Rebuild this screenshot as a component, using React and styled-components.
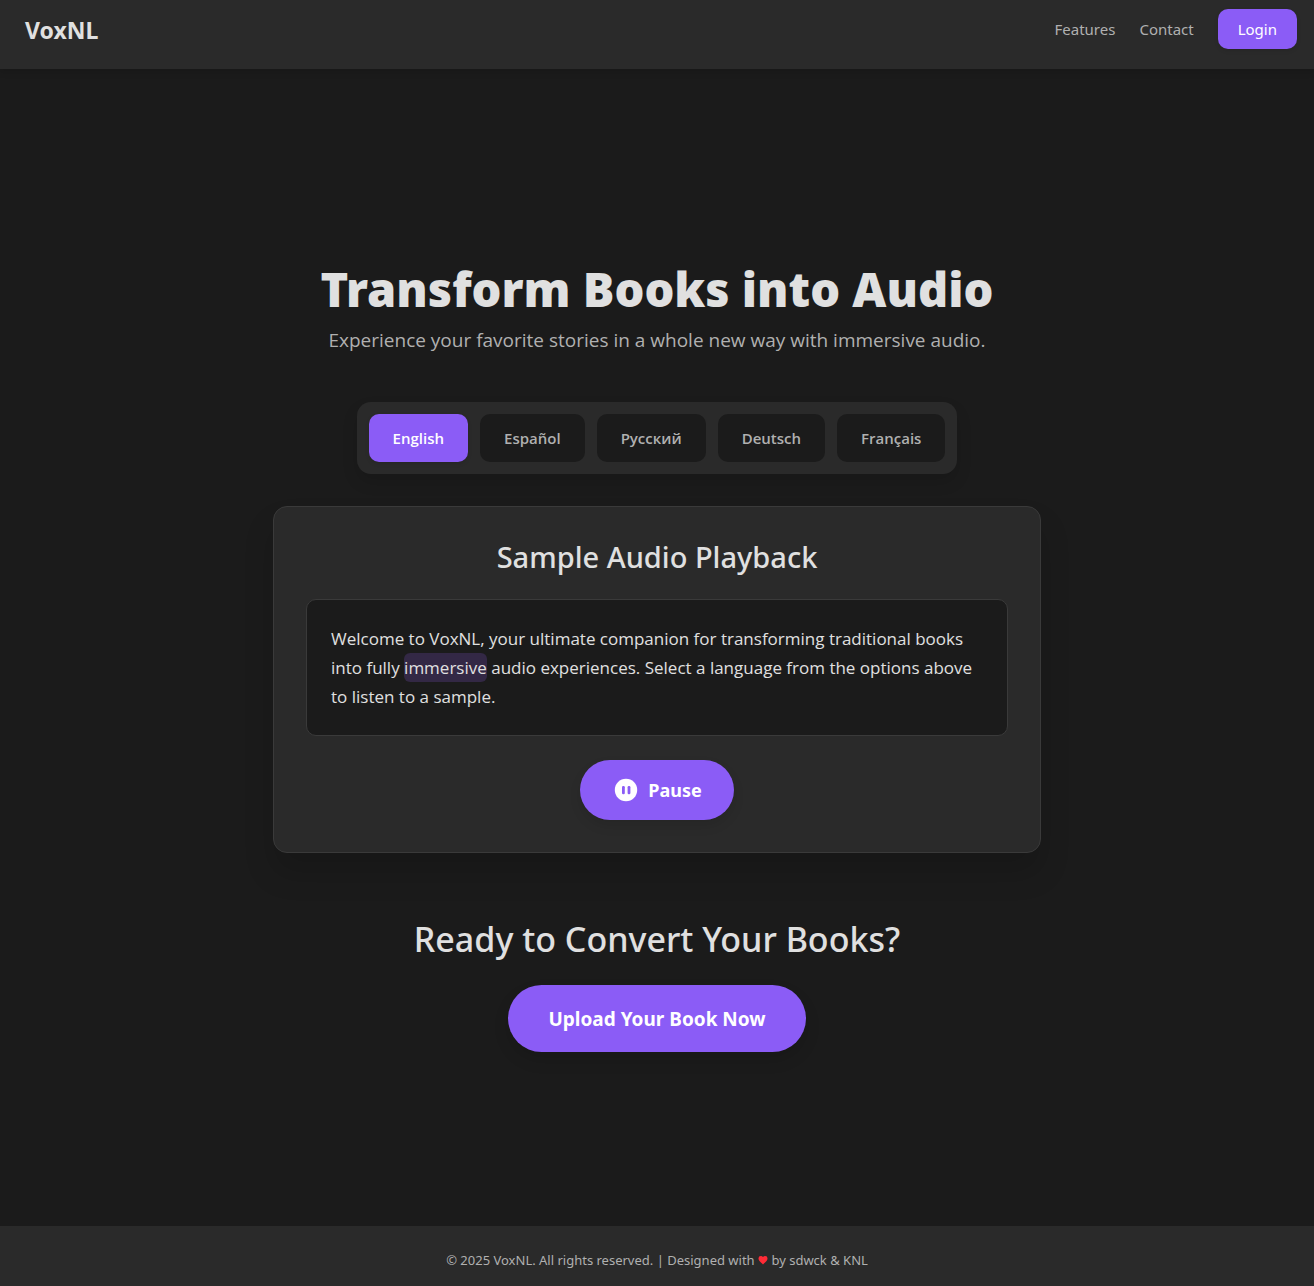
import React, { useState } from "react";
import styled, { createGlobalStyle } from "styled-components";

const GlobalStyle = createGlobalStyle`
  *, *::before, *::after { box-sizing: border-box; }
  body {
    margin: 0;
    background: #1b1b1b;
    color: #e0e0e0;
    font-family: "Noto Sans", "Open Sans", sans-serif;
  }
  button { font-family: inherit; cursor: pointer; }
`;

const Page = styled.div`
  display: flex;
  flex-direction: column;
  min-height: 100vh;
`;

const Header = styled.header`
  display: flex;
  justify-content: space-between;
  align-items: flex-start;
  padding: 9px 17px 20px 25px;
  background: #2a2a2a;
  box-shadow: 0 4px 6px rgba(0, 0, 0, 0.1);
`;

const Brand = styled.a`
  color: #e0e0e0;
  font-size: 23px;
  font-weight: 700;
  line-height: 42px;
  height: 40px;
  text-decoration: none;
`;

const Nav = styled.nav`
  display: flex;
  align-items: center;
  gap: 24px;
`;

const NavLink = styled.a`
  color: #b0b0b0;
  font-size: 15px;
  line-height: 24px;
  text-decoration: none;
`;

const Button = styled.button`
  border: 0;
  background: #8b5cf6;
  color: #fff;
`;

const LoginButton = styled(Button)`
  padding: 8px 20px;
  border-radius: 10px;
  font-size: 15px;
  line-height: 24px;
  box-shadow: 0 2px 4px rgba(0, 0, 0, 0.1);
`;

const Main = styled.main`
  flex: 1;
  display: flex;
  flex-direction: column;
  align-items: center;
  justify-content: center;
  padding: 52px 16px 32px;
`;

const Title = styled.h1`
  margin: 0 0 12px;
  font-size: 47px;
  font-weight: 900;
  line-height: 50px;
  text-align: center;
`;

const Subtitle = styled.p`
  margin: 0 0 48px;
  color: #b0b0b0;
  font-family: "Open Sans", "Noto Sans", sans-serif;
  font-size: 19px;
  line-height: 28px;
  text-align: center;
`;

const Languages = styled.div`
  display: flex;
  flex-wrap: wrap;
  justify-content: center;
  gap: 12px;
  margin-bottom: 32px;
  padding: 12px;
  border-radius: 14px;
  background: #2a2a2a;
  box-shadow: 0 8px 16px rgba(0, 0, 0, 0.12);
`;

const LanguageButton = styled(Button)`
  padding: 12px 24px;
  border-radius: 10px;
  background: ${(p) => (p.$active ? "#8b5cf6" : "#1b1b1b")};
  color: ${(p) => (p.$active ? "#fff" : "#b0b0b0")};
  font-family: "Open Sans", "Noto Sans", sans-serif;
  font-size: 15px;
  font-weight: 600;
  line-height: 24px;
  box-shadow: ${(p) => (p.$active ? "0 2px 4px rgba(0, 0, 0, 0.1)" : "none")};
`;

const Player = styled.section`
  display: flex;
  flex-direction: column;
  align-items: center;
  gap: 24px;
  width: 100%;
  max-width: 768px;
  padding: 32px;
  border: 1px solid #3a3a3a;
  border-radius: 14px;
  background: #2a2a2a;
  box-shadow: 0 20px 30px rgba(0, 0, 0, 0.15);
`;

const PlayerTitle = styled.h2`
  margin: 0;
  font-size: 29px;
  font-weight: 525;
  line-height: 36px;
`;

const Transcript = styled.p`
  align-self: stretch;
  margin: 0;
  padding: 24px;
  border: 1px solid #3a3a3a;
  border-radius: 10px;
  background: #1b1b1b;
  font-family: "Open Sans", "Noto Sans", sans-serif;
  font-size: 17px;
  line-height: 29px;
`;

const Word = styled.mark`
  display: inline-block;
  border-radius: 6px;
  background: #332845;
  color: inherit;
`;

const PillButton = styled(Button)`
  display: inline-flex;
  align-items: center;
  gap: 8px;
  border-radius: 999px;
  font-weight: 700;
`;

const PlayButton = styled(PillButton)`
  padding: 16px 32px;
  font-size: 18px;
  line-height: 28px;
  box-shadow: 0 6px 12px rgba(0, 0, 0, 0.1);
`;

const CallToAction = styled.section`
  display: flex;
  flex-direction: column;
  align-items: center;
  gap: 24px;
  margin-top: 64px;
`;

const CallTitle = styled.h2`
  margin: 0;
  font-size: 34px;
  font-weight: 550;
  line-height: 44px;
  text-align: center;
`;

const UploadButton = styled(PillButton)`
  padding: 21px 40px 19px;
  font-size: 19px;
  line-height: 27px;
  box-shadow: 0 8px 16px rgba(0, 0, 0, 0.12);
`;

const Footer = styled.footer`
  padding: 24px 16px 16px;
  background: #2a2a2a;
  color: #b0b0b0;
  font-size: 13px;
  line-height: 20px;
  text-align: center;
`;

const HeartIcon = styled.svg`
  width: 10px;
  height: 10px;
  fill: #ff2b36;
`;

const languages = ["English", "Español", "Русский", "Deutsch", "Français"];

function PauseIcon() {
  return (
    <svg width="28" height="28" viewBox="0 0 28 28" aria-hidden="true">
      <circle cx="14" cy="14" r="11.2" fill="#fff" />
      <rect x="10" y="10" width="2.8" height="8.200" rx="1.2" fill="#8b5cf6" />
      <rect x="15.600" y="10" width="2.8" height="8.200" rx="1.2" fill="#8b5cf6" />
    </svg>
  );
}

export default function App() {
  const [language, setLanguage] = useState("English");

  return (
    <Page>
      <GlobalStyle />
      <Header>
        <Brand href="#">VoxNL</Brand>
        <Nav>
          <NavLink href="#features">Features</NavLink>
          <NavLink href="#contact">Contact</NavLink>
          <LoginButton type="button">Login</LoginButton>
        </Nav>
      </Header>
      <Main>
        <Title>Transform Books into Audio</Title>
        <Subtitle>
          Experience your favorite stories in a whole new way with immersive audio.
        </Subtitle>
        <Languages>
          {languages.map((name) => (
            <LanguageButton
              key={name}
              type="button"
              $active={name === language}
              aria-pressed={name === language}
              onClick={() => setLanguage(name)}
            >
              {name}
            </LanguageButton>
          ))}
        </Languages>
        <Player>
          <PlayerTitle>Sample Audio Playback</PlayerTitle>
          <Transcript>
            Welcome to VoxNL, your ultimate companion for transforming traditional books
            into fully <Word>immersive</Word> audio experiences. Select a language from
            the options above to listen to a sample.
          </Transcript>
          <PlayButton type="button">
            <PauseIcon />
            Pause
          </PlayButton>
        </Player>
        <CallToAction>
          <CallTitle>Ready to Convert Your Books?</CallTitle>
          <UploadButton type="button">Upload Your Book Now</UploadButton>
        </CallToAction>
      </Main>
      <Footer>
        © 2025 VoxNL. All rights reserved. | Designed with{" "}
        <HeartIcon viewBox="0 0 20 20" role="img" aria-label="love">
          <path d="M10 19 8.600 17.600C3.600 13 1 10.500 1 7A4.800 4.800 0 0 1 5.800 2C7.400 2 9 2.800 10 4.100 11 2.800 12.600 2 14.200 2A4.800 4.800 0 0 1 19 7C19 10.500 16.400 13 11.400 17.600Z" />
        </HeartIcon>{" "}
        by sdwck &amp; KNL
      </Footer>
    </Page>
  );
}
